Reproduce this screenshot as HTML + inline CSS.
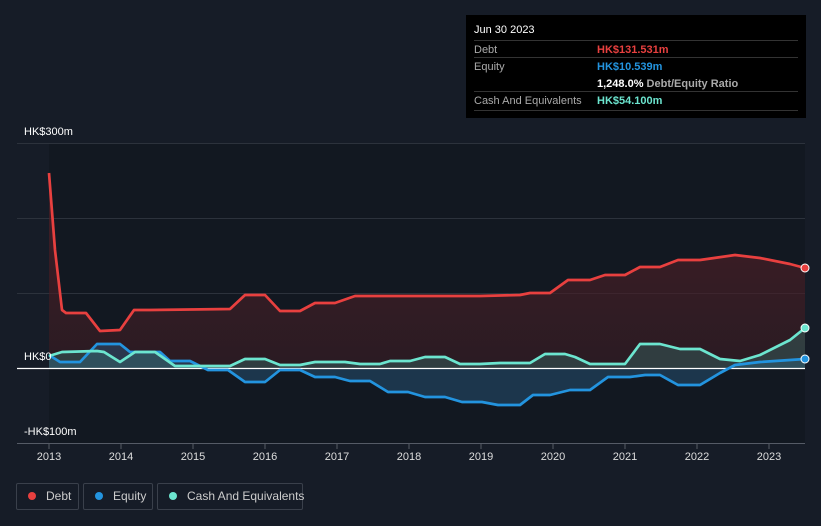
<!DOCTYPE html>
<html><head><meta charset="utf-8"><style>
body{margin:0;width:821px;height:526px;background:#161c27;font-family:"Liberation Sans",sans-serif;overflow:hidden;position:relative}
.tt{position:absolute;left:466px;top:15px;width:340px;height:103px;background:#000;color:#fff;font-size:11px}
.tt .row{position:absolute;left:8px;right:8px;border-top:1px solid #333;height:18px;line-height:18px}
.lab{color:#aaa}
.v{position:absolute;left:123px;top:0;font-weight:bold}
.lg{position:absolute;top:483px;height:27px;border:1px solid #3a404b;border-radius:2px;color:#ccc;font-size:12px;line-height:25px;box-sizing:border-box;white-space:nowrap}
.dot{display:inline-block;width:8px;height:8px;border-radius:50%;margin:0 10px 0 11px;vertical-align:0px}
</style></head><body>
<svg width="821" height="526" style="position:absolute;left:0;top:0">
<defs>
<linearGradient id="gd" x1="0" y1="0" x2="0" y2="1"><stop offset="0" stop-color="#5a2028" stop-opacity=".7"/><stop offset="1" stop-color="#3a1d24" stop-opacity=".6"/></linearGradient>
</defs>
<rect x="49" y="143" width="756" height="300" fill="#121821"/>
<g stroke="#2c323c" stroke-width="1">
<line x1="17" y1="143.5" x2="805" y2="143.5"/><line x1="17" y1="218.5" x2="805" y2="218.5"/><line x1="17" y1="293.5" x2="805" y2="293.5"/>
</g>
<path d="M49,173 L55,250 62,310 66,313 86,313 100,331 120,330 134,310 150,310 230,309 245,295 265,295 280,311 300,311 315,303 335,303 355,296 480,296 520,295 530,293 550,293 568,280 590,280 605,275 625,275 640,267 660,267 678,260 700,260 735,255 760,258 790,264 805,268 L805,368 49,368Z" fill="url(#gd)"/>
<path d="M49,355 60,362 80,362 97,344 120,344 130,352 160,352 170,361 190,361 208,370 228,370 245,382 265,382 280,370 300,370 315,377 335,377 350,381 370,381 388,392 408,392 425,397 445,397 462,402 482,402 498,405 520,405 533,395 550,395 570,390 590,390 608,377 630,377 645,375 660,375 678,385 700,385 720,373 735,365 760,362 805,359 L805,368 49,368Z" fill="#2a5a80" fill-opacity=".45"/>
<path d="M49,356 62,352 97,351 104,352 120,362 135,352 155,352 175,366 190,366 230,366 245,359 265,359 280,365 300,365 315,362 345,362 360,364 380,364 390,361 410,361 425,357 445,357 460,364 480,364 500,363 530,363 545,354 565,354 575,357 590,364 625,364 640,344 660,344 680,349 700,349 720,359 740,361 760,355 790,340 805,328 L805,368 49,368Z" fill="#3a7f78" fill-opacity=".35"/>
<line x1="17" y1="368.5" x2="805" y2="368.5" stroke="#fff" stroke-width="1.2"/>
<g fill="none" stroke-width="2.7" stroke-linejoin="round">
<polyline stroke="#e8403f" points="49,173 55,250 62,310 66,313 86,313 100,331 120,330 134,310 150,310 230,309 245,295 265,295 280,311 300,311 315,303 335,303 355,296 480,296 520,295 530,293 550,293 568,280 590,280 605,275 625,275 640,267 660,267 678,260 700,260 735,255 760,258 790,264 805,268"/>
<polyline stroke="#2394df" points="49,355 60,362 80,362 97,344 120,344 130,352 160,352 170,361 190,361 208,370 228,370 245,382 265,382 280,370 300,370 315,377 335,377 350,381 370,381 388,392 408,392 425,397 445,397 462,402 482,402 498,405 520,405 533,395 550,395 570,390 590,390 608,377 630,377 645,375 660,375 678,385 700,385 720,373 735,365 760,362 805,359"/>
<polyline stroke="#6ce5cf" points="49,356 62,352 97,351 104,352 120,362 135,352 155,352 175,366 190,366 230,366 245,359 265,359 280,365 300,365 315,362 345,362 360,364 380,364 390,361 410,361 425,357 445,357 460,364 480,364 500,363 530,363 545,354 565,354 575,357 590,364 625,364 640,344 660,344 680,349 700,349 720,359 740,361 760,355 790,340 805,328"/>
</g>
<circle cx="805" cy="268" r="4" fill="#e8403f" stroke="#fff" stroke-width="1"/>
<circle cx="805" cy="359" r="4" fill="#2394df" stroke="#fff" stroke-width="1"/>
<circle cx="805" cy="328" r="4" fill="#6ce5cf" stroke="#fff" stroke-width="1"/>
<line x1="17" y1="443.5" x2="805" y2="443.5" stroke="#555b66"/>
<g stroke="#555b66"><line x1="49" y1="443" x2="49" y2="449"/><line x1="121" y1="443" x2="121" y2="449"/><line x1="193" y1="443" x2="193" y2="449"/><line x1="265" y1="443" x2="265" y2="449"/><line x1="337" y1="443" x2="337" y2="449"/><line x1="409" y1="443" x2="409" y2="449"/><line x1="481" y1="443" x2="481" y2="449"/><line x1="553" y1="443" x2="553" y2="449"/><line x1="625" y1="443" x2="625" y2="449"/><line x1="697" y1="443" x2="697" y2="449"/><line x1="769" y1="443" x2="769" y2="449"/></g>
<g fill="#ddd" font-size="11" text-anchor="middle" font-family="Liberation Sans,sans-serif">
<text x="49" y="460">2013</text><text x="121" y="460">2014</text><text x="193" y="460">2015</text><text x="265" y="460">2016</text><text x="337" y="460">2017</text><text x="409" y="460">2018</text><text x="481" y="460">2019</text><text x="553" y="460">2020</text><text x="625" y="460">2021</text><text x="697" y="460">2022</text><text x="769" y="460">2023</text>
</g>
<g fill="#fff" font-size="11" font-family="Liberation Sans,sans-serif">
<text x="24" y="135">HK$300m</text><text x="24" y="360">HK$0</text><text x="24" y="435">-HK$100m</text>
</g>
</svg>
<div class="tt">
<div style="position:absolute;left:8px;top:9px;font-size:11px">Jun 30 2023</div>
<div class="row" style="top:25px"><span class="lab">Debt</span><span class="v" style="color:#e8403f">HK$131.531m</span></div>
<div class="row" style="top:42px"><span class="lab">Equity</span><span class="v" style="color:#2394df">HK$10.539m</span></div>
<div class="row" style="top:60px;border-top:none"><span class="v">1,248.0% <span style="color:#aaa;font-weight:bold">Debt/Equity Ratio</span></span></div>
<div class="row" style="top:76px;border-bottom:1px solid #333"><span class="lab">Cash And Equivalents</span><span class="v" style="color:#6ce5cf">HK$54.100m</span></div>
</div>
<div class="lg" style="left:16px;width:63px"><span class="dot" style="background:#e8403f"></span>Debt</div>
<div class="lg" style="left:83px;width:70px"><span class="dot" style="background:#2394df"></span>Equity</div>
<div class="lg" style="left:157px;width:146px"><span class="dot" style="background:#6ce5cf"></span>Cash And Equivalents</div>
</body></html>
